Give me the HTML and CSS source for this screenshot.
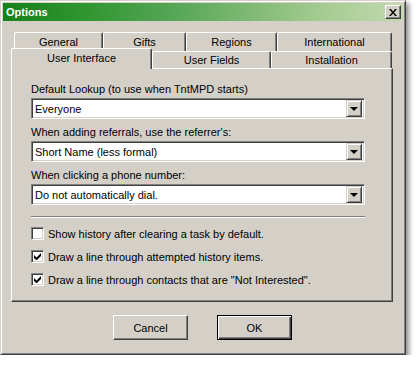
FILE: index.html
```html
<!DOCTYPE html>
<html lang="en">
<head>
    <meta charset="UTF-8">
    <title>Options</title>
    <link rel="stylesheet" href="styles.css">
</head>
<body>

    <div class="window">
        <div class="titlebar">
            <span class="title">Options</span>
            <span class="close-btn">
                <svg width="8" height="7" viewBox="0 0 8 7">
                    <path d="M0 0h2l2 2.5L6 0h2L5 3.5 8 7H6L4 4.5 2 7H0l3-3.5z" fill="#000"/>
                </svg>
            </span>
        </div>

        <div class="tabs">
            <div class="tab-row back">
                <div class="tab" style="width: 89px;">General</div>
                <div class="tab" style="width: 83px;">Gifts</div>
                <div class="tab" style="width: 91px;">Regions</div>
                <div class="tab" style="width: 115px;">International</div>
            </div>
            <div class="tab-row front">
                <div class="tab selected" style="width: 141px;">User Interface</div>
                <div class="tab" style="width: 119px;">User Fields</div>
                <div class="tab" style="width: 121px;">Installation</div>
            </div>
        </div>

        <div class="panel">
            <label class="field-label">Default Lookup (to use when TntMPD starts)</label>
            <div class="combo">
                <span class="combo-value">Everyone</span>
                <span class="combo-btn"><span class="arrow"></span></span>
            </div>

            <label class="field-label">When adding referrals, use the referrer's:</label>
            <div class="combo">
                <span class="combo-value">Short Name (less formal)</span>
                <span class="combo-btn"><span class="arrow"></span></span>
            </div>

            <label class="field-label">When clicking a phone number:</label>
            <div class="combo">
                <span class="combo-value">Do not automatically dial.</span>
                <span class="combo-btn"><span class="arrow"></span></span>
            </div>

            <div class="separator"></div>

            <div class="check-row">
                <span class="checkbox"></span>
                <span>Show history after clearing a task by default.</span>
            </div>
            <div class="check-row">
                <span class="checkbox">
                    <svg width="7" height="7" viewBox="0 0 7 7">
                        <path d="M0 2v3l2 2h1l4-4V0L2.5 4.5z" fill="#000"/>
                    </svg>
                </span>
                <span>Draw a line through attempted history items.</span>
            </div>
            <div class="check-row">
                <span class="checkbox">
                    <svg width="7" height="7" viewBox="0 0 7 7">
                        <path d="M0 2v3l2 2h1l4-4V0L2.5 4.5z" fill="#000"/>
                    </svg>
                </span>
                <span>Draw a line through contacts that are "Not Interested".</span>
            </div>
        </div>

        <div class="buttons">
            <button class="btn">Cancel</button>
            <button class="btn default">OK</button>
        </div>
    </div>

</body>
</html>
```

FILE: styles.css
```css
* {
    box-sizing: border-box;
    font-family: "Liberation Sans", Arial, sans-serif;
    font-size: 11px;
}
body {
    background-color: #ffffff;
    margin: 0;
}
.window {
    width: 406px;
    height: 355px;
    background: #d4d0c8;
    border: 1px solid;
    border-color: #d4d0c8 #404040 #404040 #d4d0c8;
    box-shadow: inset 1px 1px #ffffff, inset -1px -1px #808080, 3px 3px 5px rgba(0, 0, 0, 0.45);
    padding: 2px;
}
.titlebar {
    height: 18px;
    background: linear-gradient(to right, #16801a, #2f952f 20%, #5aa85a 45%, #86bd78 65%, #a5cc92 80%, #c2d9b0);
    display: flex;
    align-items: center;
    justify-content: space-between;
    padding: 0 2px 0 3px;
}
.title {
    color: white;
    font-weight: bold;
}
.close-btn {
    width: 16px;
    height: 14px;
    background: #d4d0c8;
    border: 1px solid;
    border-color: #ffffff #404040 #404040 #ffffff;
    box-shadow: inset -1px -1px #808080;
    display: flex;
    justify-content: center;
    align-items: center;
}
.tabs {
    margin: 11px 0 0 8px;
}
.tab-row {
    display: flex;
}
.tab-row.back {
    height: 19px;
    padding-left: 3px;
}
.tab-row.front {
    height: 17px;
    align-items: flex-end;
}
.tab {
    height: 100%;
    background: #d4d0c8;
    border-top: 1px solid #ffffff;
    border-left: 1px solid #ffffff;
    border-right: 1px solid #404040;
    box-shadow: inset -1px 0 #808080;
    border-radius: 2px 2px 0 0;
    display: flex;
    justify-content: center;
    align-items: center;
}
.tab-row.front .tab {
    height: 17px;
}
.tab.selected {
    height: 21px !important;
    position: relative;
    top: 1px;
    margin-top: -2px;
    align-items: flex-start;
    padding-top: 3px;
    z-index: 1;
}
.panel {
    margin-left: 8px;
    width: 382px;
    height: 234px;
    border: 1px solid;
    border-color: #ffffff #404040 #404040 #ffffff;
    box-shadow: inset -1px -1px #808080;
    padding: 14px 0 0 19px;
    display: flex;
    flex-direction: column;
}
.field-label {
    display: block;
    line-height: 13px;
    margin-bottom: 2px;
}
.combo {
    width: 334px;
    height: 21px;
    background: white;
    border: 1px solid;
    border-color: #808080 #ffffff #ffffff #808080;
    box-shadow: inset 1px 1px #404040, inset -1px -1px #d4d0c8;
    padding: 2px;
    display: flex;
    align-items: center;
    margin-bottom: 7px;
}
.combo-value {
    flex: 1;
    padding-left: 1px;
}
.combo-btn {
    width: 16px;
    height: 17px;
    background: #d4d0c8;
    border: 1px solid;
    border-color: #d4d0c8 #404040 #404040 #d4d0c8;
    box-shadow: inset 1px 1px #ffffff, inset -1px -1px #808080;
    display: flex;
    justify-content: center;
    align-items: center;
}
.arrow {
    width: 0;
    height: 0;
    border-left: 4px solid transparent;
    border-right: 4px solid transparent;
    border-top: 4px solid #000;
    margin-top: 1px;
}
.separator {
    width: 334px;
    height: 2px;
    border-top: 1px solid #808080;
    border-bottom: 1px solid #ffffff;
    margin: 4px 0 9px;
}
.check-row {
    display: flex;
    align-items: center;
    gap: 4px;
    height: 13px;
    margin-bottom: 10px;
}
.checkbox {
    width: 13px;
    height: 13px;
    background: white;
    border: 1px solid;
    border-color: #808080 #ffffff #ffffff #808080;
    box-shadow: inset 1px 1px #404040, inset -1px -1px #d4d0c8;
    display: flex;
    justify-content: center;
    align-items: center;
}
.buttons {
    display: flex;
    justify-content: center;
    gap: 29px;
    margin-top: 13px;
    padding-right: 1px;
}
.btn {
    width: 75px;
    height: 25px;
    background: #d4d0c8;
    border: 1px solid;
    border-color: #ffffff #404040 #404040 #ffffff;
    box-shadow: inset -1px -1px #808080;
    padding: 0;
    color: #000;
}
.btn.default {
    border: 1px solid #000;
    box-shadow: inset 1px 1px #ffffff, inset -1px -1px #404040, inset -2px -2px #808080;
}
```
